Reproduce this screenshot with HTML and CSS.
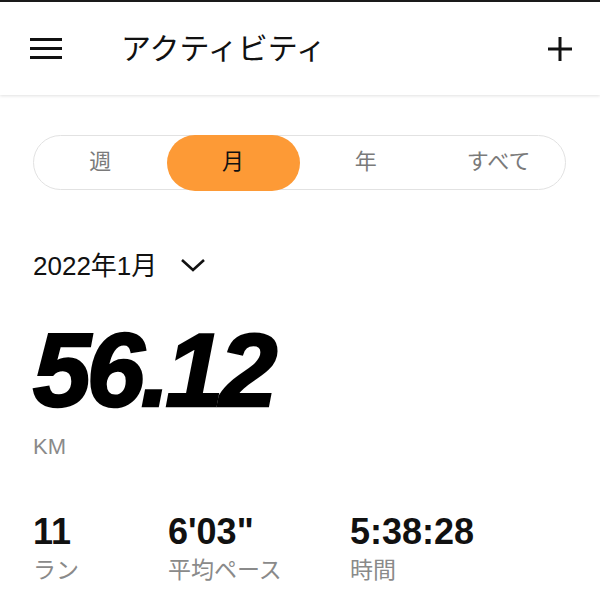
FILE: index.html
```html
<!DOCTYPE html>
<html lang="ja">
<head>
<meta charset="utf-8">
<link rel="stylesheet" href="styles.css">
</head>
<body>
<header class="topbar">
  <svg class="icon-menu" width="32" height="22" viewBox="0 0 32 22">
    <rect x="0" y="0" width="32" height="3" fill="#111"/>
    <rect x="0" y="9" width="32" height="3" fill="#111"/>
    <rect x="0" y="18" width="32" height="3" fill="#111"/>
  </svg>
  <h1 class="title">アクティビティ</h1>
  <svg class="icon-plus" width="24" height="24" viewBox="0 0 24 24">
    <rect x="10.5" y="0" width="3" height="24" fill="#111"/>
    <rect x="0" y="10.5" width="24" height="3" fill="#111"/>
  </svg>
</header>
<main class="content">
  <div class="segments">
    <div class="seg">週</div>
    <div class="seg active">月</div>
    <div class="seg">年</div>
    <div class="seg">すべて</div>
  </div>
  <div class="period">
    <span>2022年1月</span>
    <svg class="chev" width="26" height="16" viewBox="0 0 26 16">
      <polyline points="2,3 13,13 24,3" fill="none" stroke="#111" stroke-width="2.6"/>
    </svg>
  </div>
  <div class="distance">56.12</div>
  <div class="unit">KM</div>
  <div class="stats">
    <div class="stat"><div class="val">11</div><div class="lbl">ラン</div></div>
    <div class="stat"><div class="val">6'03"</div><div class="lbl">平均ペース</div></div>
    <div class="stat"><div class="val">5:38:28</div><div class="lbl">時間</div></div>
  </div>
</main>
</body>
</html>
```
FILE: styles.css
```css
* { box-sizing: border-box; }
html, body { margin: 0; padding: 0; background: #fff; }
body {
  font-family: "Liberation Sans", "Noto Sans CJK JP", sans-serif;
  color: #111;
  width: 600px;
  height: 589px;
  overflow: hidden;
}
.topbar {
  height: 95px;
  border-top: 2px solid #1a1a1a;
  display: flex;
  align-items: center;
  padding: 0 28px 0 30px;
  box-shadow: 0 1px 3px rgba(0,0,0,0.12);
  position: relative;
}
.icon-menu { display: block; flex: none; }
.title {
  margin: 0 0 6px 59px;
  font-family: "Noto Sans CJK JP", sans-serif;
  font-weight: 400;
  font-size: 30px;
  line-height: 1;
  flex: 1;
  color: #111;
}
.icon-plus { display: block; flex: none; }
.content { padding: 0 0 0 33px; }
.segments {
  margin-top: 40px;
  width: 533px;
  height: 55px;
  border: 1.5px solid #e2e2e2;
  border-radius: 28px;
  display: grid;
  grid-template-columns: repeat(4, 1fr);
  align-items: stretch;
}
.seg {
  display: flex;
  align-items: center;
  justify-content: center;
  font-family: "Noto Sans CJK JP", sans-serif;
  font-size: 22px;
  color: #7a7a7a;
  border-radius: 28px;
  margin: -1.5px 0;
  padding-bottom: 7px;
}
.seg.active { background: #fd9a36; color: #111; }
.period {
  margin-top: 58px;
  display: flex;
  align-items: center;
  height: 30px;
  font-size: 26px;
  color: #111;
}
.chev { margin-left: 23px; margin-top: 4px; }
.distance {
  margin-top: 44px;
  font-family: "Liberation Sans", sans-serif;
  font-weight: 700;
  font-style: italic;
  font-size: 104px;
  line-height: 96px;
  letter-spacing: -4px;
  -webkit-text-stroke: 2.5px #000;
  color: #000;
}
.unit {
  margin-top: 16px;
  font-size: 22px;
  color: #8a8a8a;
}
.stats {
  margin-top: 53px;
  display: grid;
  grid-template-columns: 135px 182px auto;
}
.val {
  font-size: 36px;
  font-weight: 700;
  line-height: 38px;
  color: #111;
}
.lbl {
  font-family: "Liberation Sans", "Noto Sans CJK JP", sans-serif;
  font-size: 23px;
  line-height: 30px;
  color: #8a8a8a;
  margin-top: 4px;
}
```
